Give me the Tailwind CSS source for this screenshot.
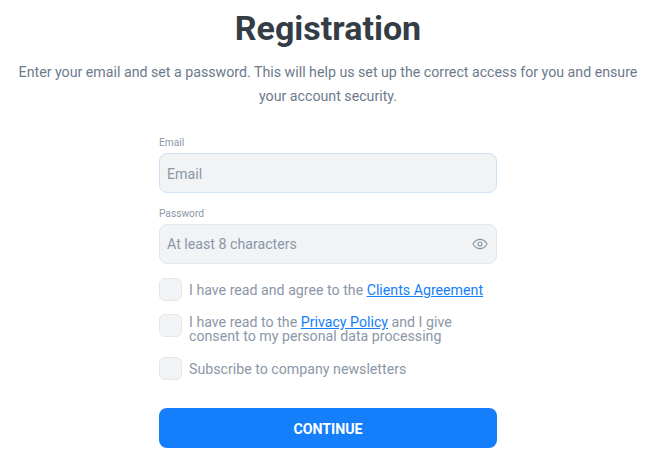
<!DOCTYPE html>
<html lang="en">
<head>
    <meta charset="UTF-8">
    <title>Registration</title>
    <script src="https://cdn.jsdelivr.net/npm/@tailwindcss/browser@4"></script>
</head>
<body class="bg-white overflow-hidden font-['Roboto',sans-serif]">
<div class="w-[656px] flex flex-col items-center">
    <h1 class="mt-[5px] text-[34px] leading-[46px] font-bold text-[#343d46]">Registration</h1>
    <p class="mt-[9px] w-[630px] text-center text-[14.2px] leading-[24px] text-[#6c7a8c]">Enter your email and set a password. This will help us set up the correct access for you and ensure your account security.</p>

    <form class="mt-[26px] w-[338px] flex flex-col">
        <label class="text-[10.2px] leading-[18px] text-[#8b97a8]">Email</label>
        <input type="text" placeholder="Email" class="mt-[1px] h-[40px] pl-[7px] pr-2 pt-[2px] rounded-lg bg-[#f1f3f5] border border-[#cfe2f6] text-[14.2px] placeholder:text-[#8b97a8]">
        <label class="mt-[12px] text-[10.2px] leading-[18px] text-[#8b97a8]">Password</label>
        <div class="mt-[1px] h-[40px] pl-[7px] pr-[8px] rounded-lg bg-[#f1f3f5] border border-[#e4e7ea] flex items-center justify-between">
            <span class="pt-[2px] text-[14.2px] text-[#8b97a8]">At least 8 characters</span>
            <svg class="w-[16px] h-[16px] text-[#8b97a8]" fill="none" stroke="currentColor" stroke-width="1.8" viewBox="0 0 24 24">
                <path d="M1.5 12s3.8-7 10.5-7 10.5 7 10.5 7-3.8 7-10.5 7-10.5-7-10.5-7z"></path>
                <circle cx="12" cy="12" r="3"></circle>
            </svg>
        </div>

        <div class="mt-[14px] flex items-center gap-[7px]">
            <span class="w-[23px] h-[23px] rounded-md bg-[#f1f3f5] border border-[#e4e7ea]"></span>
            <span class="text-[14.2px] leading-[20px] text-[#8b97a8]">I have read and agree to the <a href="#" class="text-[#147efb] underline">Clients Agreement</a></span>
        </div>
        <div class="mt-[13px] flex items-start gap-[7px]">
            <span class="w-[23px] h-[23px] rounded-md bg-[#f1f3f5] border border-[#e4e7ea]"></span>
            <span class="w-[290px] text-[14.2px] leading-[14px] pt-[1px] text-[#8b97a8]">I have read to the <a href="#" class="text-[#147efb] underline">Privacy Policy</a> and I give consent to my personal data processing</span>
        </div>
        <div class="mt-[14px] flex items-center gap-[7px]">
            <span class="w-[23px] h-[23px] rounded-md bg-[#f1f3f5] border border-[#e4e7ea]"></span>
            <span class="text-[14.2px] leading-[20px] text-[#8b97a8]">Subscribe to company newsletters</span>
        </div>

        <button type="button" class="mt-[28px] h-[40px] pt-[3px] rounded-lg bg-[#147efb] text-white text-[14.2px] font-bold">CONTINUE</button>
    </form>
</div>
</body>
</html>
